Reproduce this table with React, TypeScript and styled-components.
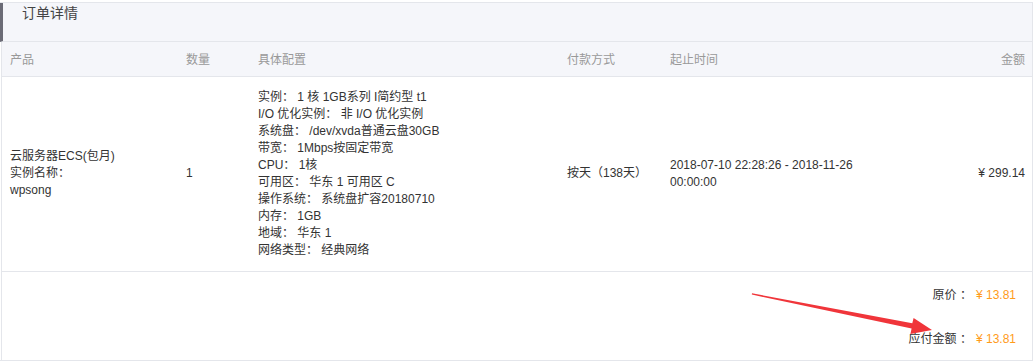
import React from 'react'
import styled, { createGlobalStyle } from 'styled-components'

const GlobalStyle = createGlobalStyle`
  html, body {
    margin: 0;
    padding: 0;
    background: #fff;
  }
  body {
    font-family: "Liberation Sans", "Noto Sans CJK SC", sans-serif;
    font-size: 12px;
    color: #333;
  }
`

const Page = styled.div`
  position: relative;
  padding-top: 2px;
`

const Panel = styled.div`
  width: 1033px;
  border-top: 1px solid #e4e6eb;
  border-right: 1px solid #e4e6eb;
  border-bottom: 1px solid #e4e6eb;
  box-sizing: border-box;
`

const Title = styled.div`
  height: 38px;
  border-left: 3px solid #6b6b76;
  border-bottom: 1px solid #e4e6eb;
  background: #f5f6fa;
  padding: 0 0 0 19px;
  font-size: 14px;
  line-height: 20px;
  color: #444;
`

const Body = styled.div`
  margin-left: 1px;
  border-left: 1px solid #e4e6eb;
`

const Table = styled.table`
  width: 100%;
  border-collapse: collapse;
  table-layout: fixed;
`

const HeadCell = styled.th<{ $w?: number; $right?: boolean }>`
  width: ${(p) => (p.$w ? `${p.$w}px` : 'auto')};
  height: 34px;
  padding: 0 ${(p) => (p.$right ? '7px' : '8px')} 0 8px;
  background: #f5f6fa;
  border-bottom: 1px solid #e4e6eb;
  color: #999;
  font-weight: normal;
  text-align: ${(p) => (p.$right ? 'right' : 'left')};
  box-sizing: border-box;
`

const Cell = styled.td<{ $right?: boolean }>`
  padding: 12px ${(p) => (p.$right ? '7px' : '8px')} 12px 8px;
  line-height: 17px;
  vertical-align: middle;
  text-align: ${(p) => (p.$right ? 'right' : 'left')};
  border-bottom: 1px solid #e4e6eb;
  color: #333;
`

const Line = styled.div`
  white-space: nowrap;
`

const Summary = styled.div`
  padding: 15px 16px 12px 0;
  display: flex;
  flex-direction: column;
  align-items: flex-end;
  gap: 27px;
`

const SumRow = styled.div`
  line-height: 17px;
  color: #333;
`

const Price = styled.span`
  color: #ff9b1a;
  margin-left: 4px;
`

const Arrow = styled.svg`
  position: absolute;
  left: 0;
  top: 0;
  pointer-events: none;
`

const config = [
  '实例： 1 核 1GB系列 I简约型 t1',
  'I/O 优化实例： 非 I/O 优化实例',
  '系统盘： /dev/xvda普通云盘30GB',
  '带宽： 1Mbps按固定带宽',
  'CPU： 1核',
  '可用区： 华东 1 可用区 C',
  '操作系统： 系统盘扩容20180710',
  '内存： 1GB',
  '地域： 华东 1',
  '网络类型： 经典网络',
]

export default function App() {
  return (
    <Page>
      <GlobalStyle />
      <Panel>
        <Title>订单详情</Title>
        <Body>
          <Table>
            <thead>
              <tr>
                <HeadCell $w={176}>产品</HeadCell>
                <HeadCell $w={72}>数量</HeadCell>
                <HeadCell $w={309}>具体配置</HeadCell>
                <HeadCell $w={103}>付款方式</HeadCell>
                <HeadCell $w={226}>起止时间</HeadCell>
                <HeadCell $right>金额</HeadCell>
              </tr>
            </thead>
            <tbody>
              <tr>
                <Cell>
                  <Line>云服务器ECS(包月)</Line>
                  <Line>实例名称：</Line>
                  <Line>wpsong</Line>
                </Cell>
                <Cell>1</Cell>
                <Cell>
                  {config.map((c) => (
                    <Line key={c}>{c}</Line>
                  ))}
                </Cell>
                <Cell>按天（138天）</Cell>
                <Cell>2018-07-10 22:28:26 - 2018-11-26 00:00:00</Cell>
                <Cell $right>¥ 299.14</Cell>
              </tr>
            </tbody>
          </Table>
          <Summary>
            <SumRow>
              原价 ：<Price>¥ 13.81</Price>
            </SumRow>
            <SumRow>
              应付金额 ：<Price>¥ 13.81</Price>
            </SumRow>
          </Summary>
        </Body>
      </Panel>
      <Arrow width="1036" height="363" viewBox="0 0 1036 363">
        <polygon
          points="752,293.3 912.3,323.2 913.6,318 932,330 910.4,334 911.6,328.6 751.8,294.6"
          fill="#f0353a"
        />
      </Arrow>
    </Page>
  )
}
